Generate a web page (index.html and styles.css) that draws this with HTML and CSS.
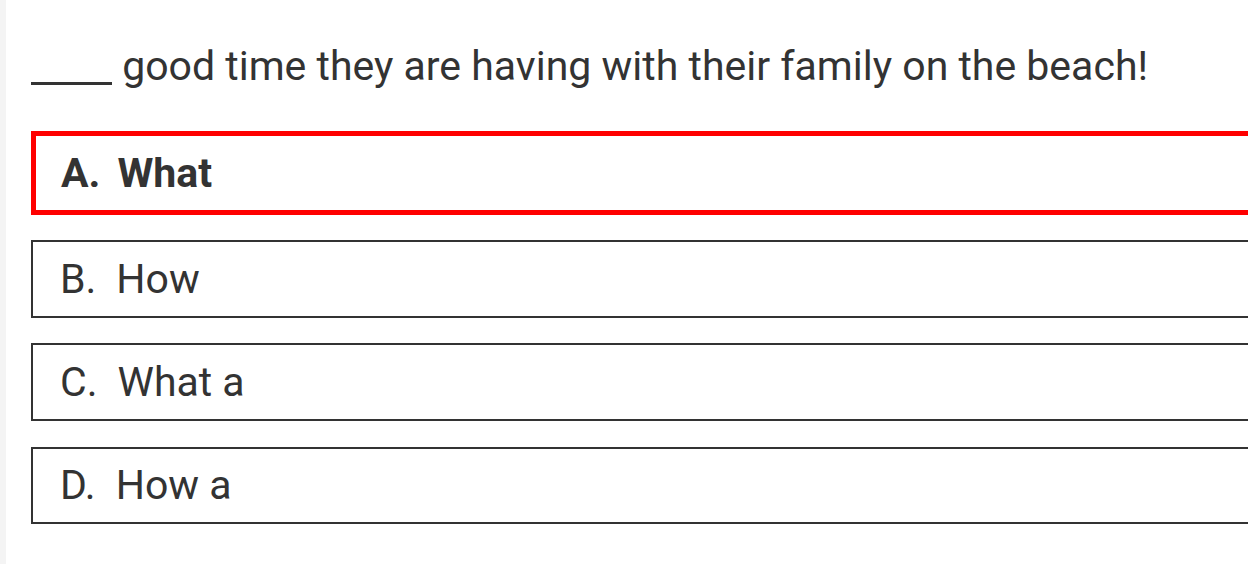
FILE: index.html
```html
<!DOCTYPE html>
<html>
<head>
<meta charset="utf-8">
<link rel="stylesheet" href="styles.css">
</head>
<body>
<div class="page">
  <div class="strip"></div>
  <div class="content">
    <p class="question"><span class="blank"></span> good time they are having with their family on the beach!</p>
    <ul class="options">
      <li class="option selected"><span class="letter">A.</span>What</li>
      <li class="option"><span class="letter">B.</span>How</li>
      <li class="option"><span class="letter">C.</span>What a</li>
      <li class="option"><span class="letter">D.</span>How a</li>
    </ul>
  </div>
</div>
</body>
</html>
```
FILE: styles.css
```css
html, body {
  margin: 0;
  padding: 0;
  background: #fff;
  overflow: hidden;
}
.page {
  display: flex;
  height: 564px;
  font-family: Roboto, "Liberation Sans", sans-serif;
  color: #333;
}
.strip {
  width: 6px;
  flex: none;
  background: #f4f4f4;
}
.content {
  flex: none;
  width: 1300px;
  padding-left: 25px;
}
.question {
  margin: 0;
  padding-top: 42px;
  font-size: 41px;
  line-height: 48px;
}
.blank {
  display: inline-block;
  width: 81px;
  height: 0;
  border-bottom: 3.5px solid #333;
  vertical-align: -5px;
}
.options {
  list-style: none;
  margin: 41px 0 0;
  padding: 0;
  display: flex;
  flex-direction: column;
  gap: 25.7px;
}
.option {
  border: 2px solid #333;
  height: 73.5px;
  display: flex;
  align-items: center;
  padding-left: 27px;
  font-size: 41px;
}
.option.selected {
  border: 5px solid #f00;
  padding-left: 25px;
  font-weight: bold;
}
.letter {
  margin-right: 20px;
}
.selected .letter {
  margin-right: 17px;
}
```
